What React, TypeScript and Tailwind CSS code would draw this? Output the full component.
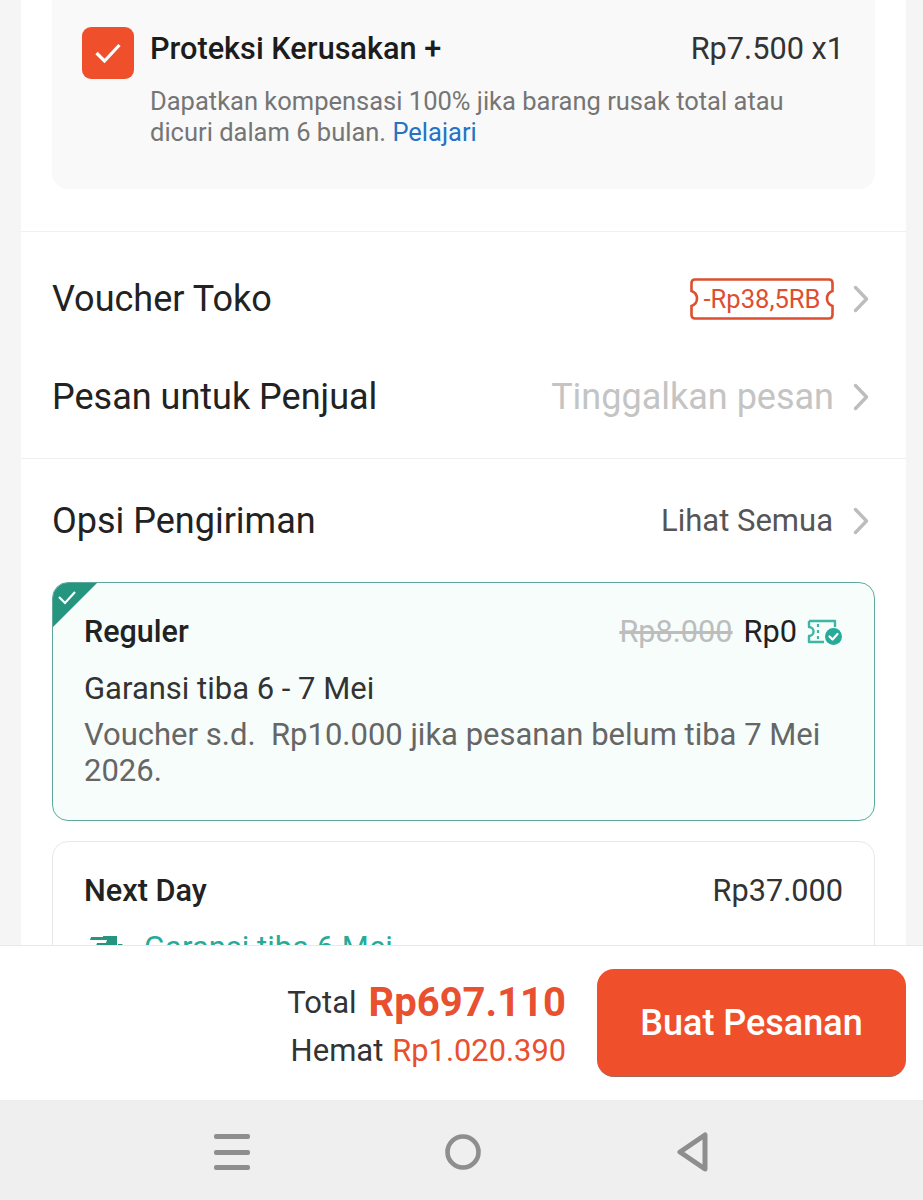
import React from "react";

const Chevron = () => (
  <svg width="18" height="30" viewBox="0 0 18 30" fill="none" className="shrink-0">
    <path d="M3.5 3.5 L14.5 15 L3.5 26.5" stroke="#bdbdbd" strokeWidth="3.4" strokeLinecap="round" strokeLinejoin="round" />
  </svg>
);

const Ticket = () => (
  <svg width="144" height="42" viewBox="0 0 144 42" fill="none" className="absolute left-0 top-0">
    <path
      d="M5 1.5 H139 Q142.5 1.5 142.5 5 V13 Q137 15 137 20.5 Q137 26 142.5 28 V37 Q142.5 40.5 139 40.5 H5 Q1.5 40.5 1.5 37 V28 Q7 26 7 20.5 Q7 15 1.5 13 V5 Q1.5 1.5 5 1.5 Z"
      stroke="#dd4f30"
      strokeWidth="2.6"
      fill="#ffffff"
    />
  </svg>
);

const VoucherCheck = () => (
  <svg width="36" height="28" viewBox="0 0 36 28" fill="none" className="shrink-0">
    <path d="M2 3 H28 V9 M2 3 V9 A4.5 4.5 0 0 1 2 18 V24 H17" stroke="#3fb5a5" strokeWidth="2.4" strokeLinejoin="round" />
    <path d="M11 6 V9 M11 12 V15 M11 18 V21" stroke="#3fb5a5" strokeWidth="2.2" />
    <circle cx="26.5" cy="18.5" r="8.5" fill="#26aa99" />
    <path d="M22.5 18.5 L25.5 21.5 L30.5 16" stroke="#ffffff" strokeWidth="2.2" strokeLinecap="round" strokeLinejoin="round" />
  </svg>
);

const Truck = () => (
  <svg width="36" height="26" viewBox="0 0 36 26" fill="none" className="ml-[6px] shrink-0">
    <path d="M13 1 H27 V22 H12 L13 18 H3 L4 15 H14 L15 11 H6 L7 8 H16 L17 5 H0 L1 2 H13 Z" fill="#26957f" />
    <path d="M28 9 H32 L36 14 V22 H28 Z" fill="#26957f" />
  </svg>
);

const Row = ({ label, right, className }: { label: string; right: React.ReactNode; className: string }) => (
  <div className={`flex items-center justify-between pl-[31px] pr-[36px] ${className}`}>
    <span className="text-[36px] leading-[40px] text-[#222222]">{label}</span>
    <div className="flex items-center gap-[18px]">
      {right}
      <Chevron />
    </div>
  </div>
);

export default function App() {
  return (
    <div
      className="flex h-[1200px] w-[923px] flex-col overflow-hidden bg-[#f5f5f5]"
      style={{ fontFamily: 'Roboto, "Noto Sans", sans-serif' }}
    >
      <main className="h-[945px] overflow-hidden pl-[21px] pr-[17px]">
        <div className="h-[1000px] bg-white">
          <section className="px-[31px]">
            <div className="-mt-[20px] flex h-[209px] gap-[16px] rounded-[16px] bg-[#f9f9f9] pl-[30px] pr-[31px] pt-[47px]">
              <div className="flex h-[52px] w-[52px] shrink-0 items-center justify-center rounded-[9px] bg-[#ef4f2b]">
                <svg width="30" height="24" viewBox="0 0 30 24" fill="none">
                  <path d="M3.5 12 L11.5 20 L26.5 4" stroke="#ffffff" strokeWidth="3.2" />
                </svg>
              </div>
              <div className="min-w-0 flex-1">
                <div className="flex items-center justify-between">
                  <span className="text-[30.7px] font-medium leading-[44px] text-[#1c1c1c]">Proteksi Kerusakan +</span>
                  <span className="text-[30.7px] leading-[44px] text-[#333333]">Rp7.500 x1</span>
                </div>
                <p className="mt-[15px] text-[25.5px] leading-[31px] text-[#757575]">
                  Dapatkan kompensasi 100% jika barang rusak total atau
                  <br />
                  dicuri dalam 6 bulan. <span className="text-[#2673c4]">Pelajari</span>
                </p>
              </div>
            </div>
          </section>

          <div className="mt-[42px] h-[1px] bg-[#f0f0f0]" />

          <Row
            label="Voucher Toko"
            className="mt-[47px] h-[40px]"
            right={
              <div className="relative -mt-[1px] flex h-[42px] w-[144px] items-center justify-center">
                <Ticket />
                <span className="relative text-[25.6px] leading-[30px] text-[#dd4f30]">-Rp38,5RB</span>
              </div>
            }
          />
          <Row
            label="Pesan untuk Penjual"
            className="mt-[58px] h-[40px]"
            right={<span className="text-[36px] leading-[40px] text-[#c4c4c4]">Tinggalkan pesan</span>}
          />

          <div className="mt-[41px] h-[1px] bg-[#efefef]" />

          <Row
            label="Opsi Pengiriman"
            className="mt-[42px] h-[40px]"
            right={<span className="mr-[1px] text-[31px] leading-[40px] text-[#555555]">Lihat Semua</span>}
          />

          <section className="mt-[41px] px-[31px]">
            <div className="relative h-[239px] overflow-hidden rounded-[16px] border border-[#5ea99c] bg-[#f6fdfb] pl-[31px] pr-[31px] pt-[31px]">
              <svg width="46" height="46" viewBox="0 0 46 46" className="absolute -left-px -top-px">
                <path d="M0 46 V0 H46 Z" fill="#26957f" />
                <path d="M7 15 L13 21 L23 10" stroke="#ffffff" strokeWidth="2.2" fill="none" />
              </svg>
              <div className="flex h-[36px] items-center justify-between">
                <span className="text-[30.5px] font-medium leading-[36px] text-[#222222]">Reguler</span>
                <div className="flex items-center">
                  <span className="text-[30.7px] leading-[36px] text-[#bdbdbd] line-through">Rp8.000</span>
                  <span className="ml-[11px] text-[30.7px] leading-[36px] text-[#222222]">Rp0</span>
                  <span className="ml-[10px]">
                    <VoucherCheck />
                  </span>
                </div>
              </div>
              <p className="mt-[21px] text-[31px] leading-[36px] text-[#333333]">Garansi tiba 6 - 7 Mei</p>
              <p className="mt-[10px] whitespace-pre text-[31px] leading-[36px] text-[#666666]">
                {"Voucher s.d.  Rp10.000 jika pesanan belum tiba 7 Mei\n2026."}
              </p>
            </div>

            <div className="mt-[20px] h-[140px] rounded-[16px] border border-[#e8e8e8] bg-white pl-[31px] pr-[31px] pt-[31px]">
              <div className="flex h-[36px] items-center justify-between">
                <span className="text-[30.7px] font-medium leading-[36px] text-[#222222]">Next Day</span>
                <span className="text-[30.7px] leading-[36px] text-[#333333]">Rp37.000</span>
              </div>
              <div className="mt-[21px] flex items-center gap-[18px]">
                <Truck />
                <span className="text-[31px] leading-[36px] text-[#26aa99]">Garansi tiba 6 Mei</span>
              </div>
            </div>
          </section>
        </div>
      </main>

      <footer className="flex h-[155px] shrink-0 items-center justify-end border-t border-[#e8e8e8] bg-white pr-[17px]">
        <div className="mr-[31px] flex flex-col items-end pt-[3px]">
          <div className="flex items-center gap-[12px]">
            <span className="text-[31px] leading-[44px] text-[#333333]">Total</span>
            <span className="text-[40px] font-bold leading-[44px] text-[#e8502f]">Rp697.110</span>
          </div>
          <div className="mt-[8px] flex items-center gap-[9px]">
            <span className="text-[31px] leading-[36px] text-[#333333]">Hemat</span>
            <span className="text-[30.8px] leading-[36px] text-[#e8502f]">Rp1.020.390</span>
          </div>
        </div>
        <button className="mb-[1px] h-[108px] w-[309px] rounded-[17px] border-b border-[#a0695c] bg-[#ef4f2b] pt-[2px] text-[36px] font-medium text-white">
          Buat Pesanan
        </button>
      </footer>

      <nav className="relative flex h-[100px] shrink-0 items-center bg-[#efefef] pt-[3px]">
        <div className="flex w-full items-center justify-between pl-[214px] pr-[214px]">
          <svg width="36" height="38" viewBox="0 0 36 38" fill="#8e8e8e">
            <rect x="0" y="1" width="36" height="5" rx="2" />
            <rect x="0" y="17" width="36" height="5" rx="2" />
            <rect x="0" y="32" width="36" height="5" rx="2" />
          </svg>
          <svg width="36" height="38" viewBox="0 0 36 38" fill="none" className="-ml-[2px]">
            <circle cx="18" cy="19" r="15.5" stroke="#8e8e8e" strokeWidth="4.6" />
          </svg>
          <svg width="32" height="40" viewBox="0 0 32 40" fill="none">
            <path d="M28 3 V37 L3 20 Z" stroke="#8e8e8e" strokeWidth="5" strokeLinejoin="round" />
          </svg>
        </div>
      </nav>
    </div>
  );
}
